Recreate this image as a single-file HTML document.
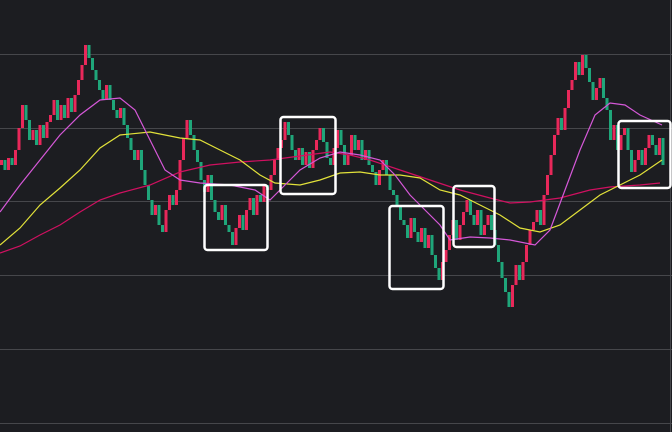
<!DOCTYPE html>
<html><head><meta charset="utf-8"><style>
html,body{margin:0;padding:0;background:#1c1d21;width:672px;height:432px;overflow:hidden}
svg{display:block}
</style></head><body>
<svg width="672" height="432" viewBox="0 0 672 432" xmlns="http://www.w3.org/2000/svg">
<rect width="672" height="432" fill="#1c1d21"/>
<g stroke="#46474b" stroke-width="1">
<line x1="0" y1="54.5" x2="672" y2="54.5"/><line x1="0" y1="128.5" x2="672" y2="128.5"/>
<line x1="0" y1="201.5" x2="672" y2="201.5"/><line x1="0" y1="275.5" x2="672" y2="275.5"/>
<line x1="0" y1="349.5" x2="672" y2="349.5"/><line x1="0" y1="423.5" x2="672" y2="423.5"/>
<line x1="670.5" y1="0" x2="670.5" y2="432"/>
</g>
<path fill="none" stroke="#e8285a" stroke-width="3" d="M1.5,165V160 M8.5,170V158 M15.5,165V150 M19,150V128 M22.5,128V105 M33,140V130 M40,145V125 M47,138V122 M50.5,122V115 M54,115V100 M61,120V105 M68,118V98 M75,112V95 M78.5,95V80 M82,80V65 M85.5,65V45 M106.5,100V85 M120.5,118V108 M138,160V150 M155.5,215V205 M166,232V210 M169.5,210V195 M176.5,205V190 M180,190V160 M183.5,160V138 M187,138V120 M208,192V175 M222,220V205 M236,245V228 M239.5,228V215 M246.5,230V210 M250,210V198 M257,215V195 M264,202V185 M271,190V175 M274.5,175V160 M278,160V148 M281.5,148V140 M285,140V122 M299,160V148 M306,165V152 M313,168V150 M316.5,150V140 M320,140V128 M334,165V148 M337.5,148V130 M348,165V155 M351.5,155V135 M358.5,150V140 M365.5,160V150 M379.5,185V170 M383,170V160 M411,238V218 M421.5,242V228 M428.5,248V235 M442.5,280V262 M446,262V250 M449.5,250V235 M453,235V220 M460,240V225 M463.5,225V212 M467,212V200 M477.5,225V210 M484.5,235V225 M488,225V215 M512.5,307V285 M516,285V265 M523,280V262 M526.5,262V245 M530,245V230 M533.5,230V222 M537,222V210 M544,225V195 M547.5,195V175 M551,175V155 M554.5,155V135 M558,135V118 M565,130V108 M568.5,108V90 M572,90V80 M575.5,80V62 M582.5,75V55 M596.5,100V88 M600,88V78 M614,140V125 M621,150V135 M624.5,135V128 M635,172V160 M638.5,160V150 M645.5,165V148 M649,148V135 M659.5,155V138"/>
<path fill="none" stroke="#1fa67a" stroke-width="3" d="M5,160V170 M12,158V165 M26,105V120 M29.5,120V140 M36.5,130V145 M43.5,125V138 M57.5,100V120 M64.5,105V118 M71.5,98V112 M89,45V58 M92.5,58V70 M96,70V80 M99.5,80V90 M103,90V100 M110,85V100 M113.5,100V110 M117,110V118 M124,108V125 M127.5,125V138 M131,138V150 M134.5,150V160 M141.5,150V170 M145,170V185 M148.5,185V200 M152,200V215 M159,205V225 M162.5,225V232 M173,195V205 M190.5,120V135 M194,135V150 M197.5,150V162 M201,162V180 M204.5,180V192 M211.5,175V200 M215,200V212 M218.5,212V220 M225.5,205V225 M229,225V232 M232.5,232V245 M243,215V230 M253.5,198V215 M260.5,195V202 M267.5,185V190 M288.5,122V135 M292,135V150 M295.5,150V160 M302.5,148V165 M309.5,152V168 M323.5,128V142 M327,142V158 M330.5,158V165 M341,130V145 M344.5,145V165 M355,135V150 M362,140V160 M369,150V165 M372.5,165V172 M376,172V185 M386.5,160V175 M390,175V190 M393.5,190V195 M397,195V205 M400.5,205V220 M404,220V225 M407.5,225V238 M414.5,218V232 M418,232V242 M425,228V248 M432,235V255 M435.5,255V268 M439,268V280 M456.5,220V240 M470.5,200V215 M474,215V225 M481,210V235 M491.5,215V230 M495,230V245 M498.5,245V262 M502,262V278 M505.5,278V292 M509,292V307 M519.5,265V280 M540.5,210V225 M561.5,118V130 M579,62V75 M586,55V68 M589.5,68V82 M593,82V100 M603.5,78V98 M607,98V110 M610.5,110V140 M617.5,125V150 M628,128V150 M631.5,150V172 M642,150V165 M652.5,135V145 M656,145V155 M663,138V165"/>
<g fill="none" stroke-width="1.2">
<polyline stroke="#d01060" points="0,253 20,246 40,235 60,225 80,212 100,200 120,193 150,185 180,172 210,165 240,162 270,160 300,156 330,152 350,155 370,160 400,170 430,180 460,190 490,198 510,203 530,202 560,198 590,190 610,187 640,185 660,183"/>
<polyline stroke="#e2e23a" points="0,245 20,228 40,205 60,188 80,170 100,148 120,135 150,132 180,138 200,140 220,150 240,160 260,175 275,183 300,185 320,180 340,173 360,172 380,175 400,175 420,178 440,190 460,195 480,205 500,215 520,228 540,232 560,225 580,210 600,195 620,185 640,175 662,160"/>
<polyline stroke="#d558d8" points="0,212 20,185 40,160 60,135 80,115 100,100 120,98 135,110 150,140 165,170 180,180 200,183 230,185 255,190 270,200 285,185 300,170 320,158 340,152 360,155 380,160 395,175 410,195 425,210 440,225 450,240 470,237 490,238 510,240 535,245 550,230 565,190 580,150 595,115 610,103 625,105 640,115 662,125"/>
</g>
<g fill="none" stroke="#fff" stroke-width="2.5">
<rect x="204.5" y="185" width="63" height="65" rx="3"/>
<rect x="280.5" y="117" width="55" height="77" rx="3"/>
<rect x="389.5" y="206" width="54" height="83" rx="3"/>
<rect x="453.5" y="186" width="41" height="61" rx="3"/>
<rect x="618.5" y="121" width="52" height="67" rx="3"/>
</g>
</svg>
</body></html>
